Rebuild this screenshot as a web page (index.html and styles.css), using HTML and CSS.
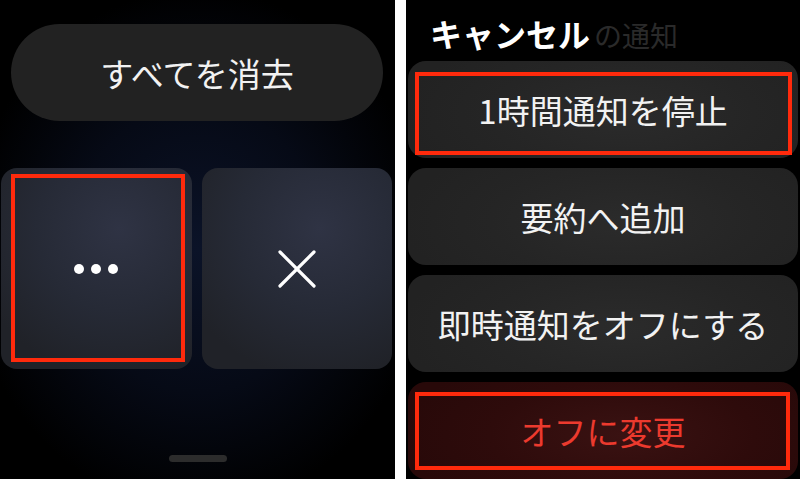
FILE: index.html
```html
<!DOCTYPE html>
<html lang="ja">
<head>
<meta charset="utf-8">
<link rel="stylesheet" href="styles.css">
</head>
<body>
<div class="screen">
  <section class="left">
    <div class="pill">すべてを消去</div>
    <div class="tiles">
      <div class="tile">
        <span class="dots"><i></i><i></i><i></i></span>
        <div class="mark mark-tile"></div>
      </div>
      <div class="tile">
        <svg class="xicon" viewBox="0 0 38 38" width="38" height="38">
          <path d="M2 2 L36 36 M36 2 L2 36" stroke="#fff" stroke-width="3.2" stroke-linecap="round" fill="none"/>
        </svg>
      </div>
    </div>
    <div class="homebar"></div>
  </section>
  <div class="divider"></div>
  <section class="right">
    <h1 class="title"><b>キャンセル</b><span class="ghost">の通知</span></h1>
    <div class="btn">1時間通知を停止<div class="mark mark-b1"></div></div>
    <div class="btn">要約へ追加</div>
    <div class="btn">即時通知をオフにする</div>
    <div class="btn btn-red">オフに変更<div class="mark mark-b4"></div></div>
  </section>
</div>
</body>
</html>
```
FILE: styles.css
```css
html, body {
  margin: 0;
  padding: 0;
  background: #000;
}
body {
  font-family: "Noto Sans CJK JP", "Noto Sans", sans-serif;
  color: #f2f2f2;
}
.screen {
  width: 800px;
  height: 479px;
  display: flex;
  overflow: hidden;
}
.left {
  width: 395px;
  height: 479px;
  flex: none;
  display: flex;
  flex-direction: column;
  background:
    radial-gradient(ellipse 230px 260px at 50% 52%, #0b1328 0%, #060a16 55%, rgba(0,0,0,0) 100%),
    #000;
  box-sizing: border-box;
  padding-top: 24px;
}
.pill {
  margin-left: 11px;
  width: 372px;
  height: 97px;
  border-radius: 49px;
  background: #222222;
  display: flex;
  align-items: center;
  justify-content: center;
  font-size: 33px;
}
.tiles {
  margin-top: 47px;
  margin-left: 1px;
  display: flex;
  gap: 10px;
}
.tile {
  position: relative;
  width: 191px;
  height: 201px;
  border-radius: 16px;
  background: radial-gradient(ellipse 150px 150px at 62% 30%, #2f3344 0%, #262a36 55%, #202228 100%);
  display: flex;
  align-items: center;
  justify-content: center;
}
.tile + .tile {
  width: 190px;
}
.dots {
  display: flex;
  gap: 7px;
  margin-left: -2px;
}
.dots i {
  display: block;
  width: 10px;
  height: 10px;
  border-radius: 50%;
  background: #fff;
}
.xicon {
  display: block;
}
.mark {
  position: absolute;
  border: 4px solid #ff2a0c;
  box-sizing: border-box;
}
.mark-tile {
  left: 10px;
  top: 6px;
  width: 174px;
  height: 188px;
}
.homebar {
  margin-top: 86px;
  align-self: center;
  width: 58px;
  height: 7px;
  border-radius: 4px;
  background: #2c2c2c;
}
.divider {
  width: 11px;
  flex: none;
  background: #fff;
}
.right {
  width: 394px;
  flex: none;
  background: #000;
  display: flex;
  flex-direction: column;
  gap: 10px;
  padding: 0 2px;
  box-sizing: border-box;
}
.title {
  margin: 0;
  height: 51px;
  padding: 18px 0 0 22px;
  box-sizing: border-box;
  font-size: 32px;
  line-height: 31px;
  font-weight: 400;
  white-space: nowrap;
}
.title b {
  font-weight: 700;
  color: #fff;
}
.ghost {
  color: #2a2a2a;
  font-size: 28px;
  margin-left: 4px;
}
.btn {
  position: relative;
  flex: none;
  height: 97px;
  border-radius: 18px;
  background: radial-gradient(ellipse 220px 90px at 55% 55%, #2b2b2b 0%, #252525 60%, #222222 100%);
  display: flex;
  align-items: center;
  justify-content: center;
  font-size: 33px;
  white-space: nowrap;
}
.btn-red {
  background: radial-gradient(ellipse 220px 90px at 55% 55%, #3a1212 0%, #2e0b0b 60%, #280909 100%);
  color: #ec3a2e;
}
.mark-b1 {
  left: 7px;
  top: 11px;
  right: 6px;
  bottom: 3px;
}
.mark-b4 {
  left: 7px;
  top: 10px;
  right: 8px;
  bottom: 9px;
}
```
